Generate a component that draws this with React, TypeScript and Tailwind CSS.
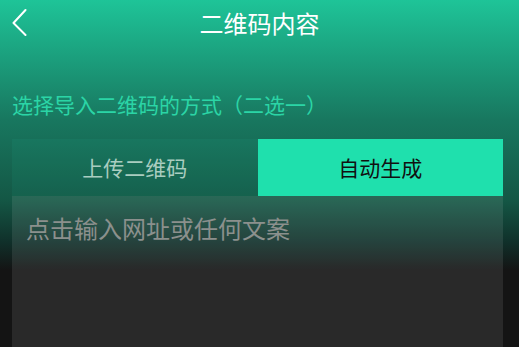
import React from "react";

export default function App() {
  return (
    <div
      className="w-[519px] h-[347px] overflow-hidden bg-[linear-gradient(180deg,#1ec498_0px,#18775f_120px,#145745_200px,#10302a_242px,#141414_270px)] text-white"
      style={{ fontFamily: '"Noto Sans CJK SC", "Noto Sans", sans-serif' }}
    >
      <div className="relative h-12 flex items-center justify-center">
        <svg
          className="absolute left-[10px] top-[8px]"
          width="20"
          height="28"
          viewBox="0 0 20 28"
          fill="none"
        >
          <path d="M15.5 2 L3.5 15 L15.5 27" stroke="white" strokeWidth="2" strokeLinecap="round" strokeLinejoin="round" />
        </svg>
        <span className="text-[24px] leading-[30px] mt-[-2px]">二维码内容</span>
      </div>
      <div className="mt-[42px] pl-[12px] text-[21px] leading-[28px] text-[#2bd5a6]">
        选择导入二维码的方式（二选一）
      </div>
      <div className="ml-[12px] w-[491px] mt-[21px]">
        <div className="flex h-[57px]">
          <div className="flex-1 flex items-center justify-center bg-[rgba(40,200,160,0.08)] text-[21px] text-[#a9cdc0]">
            上传二维码
          </div>
          <div className="flex-1 flex items-center justify-center bg-[#1fe0ad] text-[21px] text-[#111]">
            自动生成
          </div>
        </div>
        <div className="h-[160px] bg-[rgba(255,255,255,0.09)] pt-[16px] pl-[14px]">
          <div className="text-[24px] leading-[32px] text-[#8b908d]">点击输入网址或任何文案</div>
        </div>
      </div>
    </div>
  );
}
